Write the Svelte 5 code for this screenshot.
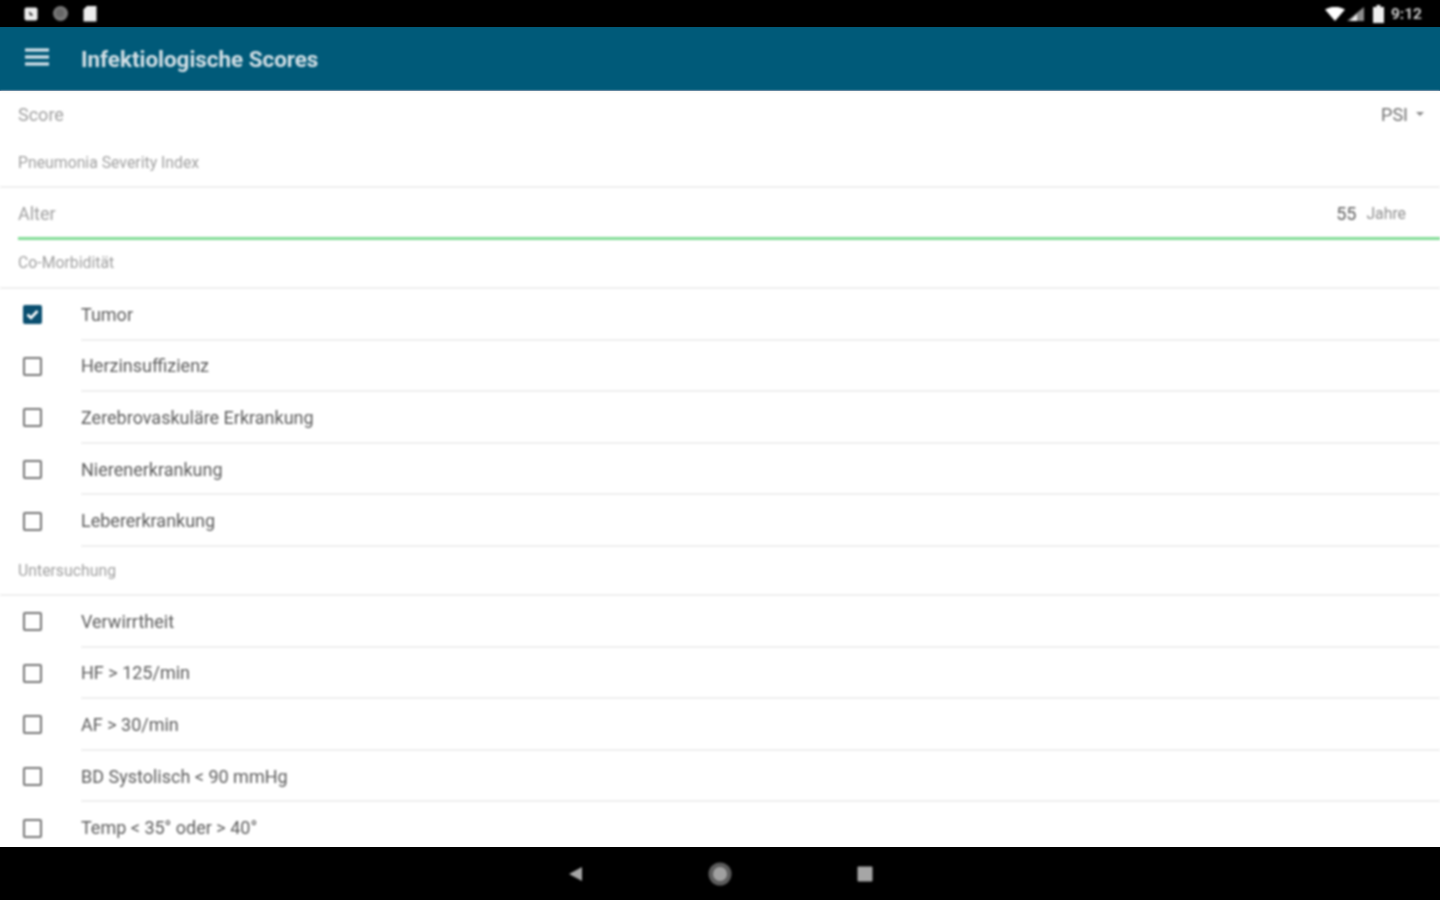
<script>
    const comorbid = [
        { label: 'Tumor', checked: true },
        { label: 'Herzinsuffizienz' },
        { label: 'Zerebrovaskuläre Erkrankung' },
        { label: 'Nierenerkrankung' },
        { label: 'Lebererkrankung' }
    ];
    const exam = [
        { label: 'Verwirrtheit' },
        { label: 'HF > 125/min' },
        { label: 'AF > 30/min' },
        { label: 'BD Systolisch < 90 mmHg' },
        { label: 'Temp < 35° oder > 40°' }
    ];
</script>

{#snippet row(item)}
    <div class="row">
        <span class="check" class:checked={item.checked}>
            {#if item.checked}
                <svg viewBox="0 0 15 15" width="15" height="15">
                    <path d="M2.5 7.5l3.5 3.5 6.5-7" fill="none" stroke="#fff" stroke-width="2.6" />
                </svg>
            {/if}
        </span>
        <span class="row-label">{item.label}</span>
    </div>
{/snippet}

<div class="screen">
    <div class="status-bar">
        <div class="status-icons soft">
            <svg viewBox="0 0 14 14" width="14" height="14">
                <rect x="0.5" y="0.5" width="13" height="13" rx="2" fill="#eee" />
                <path d="M5 4l4 4-1 1-1-1-1 1z" fill="#222" />
            </svg>
            <svg viewBox="0 0 17 17" width="17" height="17">
                <circle cx="8.5" cy="8.5" r="7.5" fill="#777" />
                <circle cx="8" cy="8" r="4" fill="#666" />
            </svg>
            <svg viewBox="0 0 14 17" width="14" height="17">
                <path d="M4 1h9.500v15.500H0.500V4.500z" fill="#eee" />
            </svg>
        </div>
        <div class="status-right soft">
            <svg viewBox="0 0 20 14" width="20" height="14">
                <path d="M0 2.500Q10-3 20 2.500L10 14z" fill="#fff" />
            </svg>
            <svg viewBox="0 0 17 14" width="17" height="14">
                <path d="M17 0v14H0z" fill="#8c8c8c" />
                <path d="M10 7v7H3z" fill="#eee" />
            </svg>
            <svg class="battery" viewBox="0 0 11 18" width="11" height="18">
                <path d="M3.500 0h4v2H11v16H0V2h3.500z" fill="#eee" />
            </svg>
            <span class="clock">9:12</span>
        </div>
    </div>

    <header class="toolbar">
        <svg class="menu soft" viewBox="0 0 24 18" width="24" height="18">
            <path d="M0 2h24M0 9h24M0 16h24" stroke="#dfeaf0" stroke-width="3" />
        </svg>
        <h1 class="soft">Infektiologische Scores</h1>
    </header>

    <main class="content soft">
        <section class="score">
            <div class="score-top">
                <span class="muted">Score</span>
                <span class="select">PSI<i class="caret"></i></span>
            </div>
            <div class="score-name">Pneumonia Severity Index</div>
        </section>

        <section class="age">
            <span class="muted">Alter</span>
            <span class="age-value">55</span>
            <span class="age-unit">Jahre</span>
        </section>

        <div class="heading first">Co-Morbidität</div>
        {#each comorbid as item}
            {@render row(item)}
        {/each}

        <div class="heading">Untersuchung</div>
        {#each exam as item}
            {@render row(item)}
        {/each}
    </main>

    <nav class="nav-bar">
        <svg class="soft" viewBox="0 0 15 16" width="15" height="16">
            <path d="M14 1v14L1 8z" fill="#a6a6a6" />
        </svg>
        <svg class="soft" viewBox="0 0 24 24" width="24" height="24">
            <circle cx="12" cy="12" r="11.500" fill="#5c5c5c" />
            <circle cx="12" cy="12" r="7" fill="#a0a0a0" />
        </svg>
        <svg class="soft" viewBox="0 0 16 16" width="16" height="16">
            <rect x="0.500" y="0.500" width="15" height="15" rx="1" fill="#a6a6a6" />
        </svg>
    </nav>
</div>

<style>
    :global(body) {
        margin: 0;
        background: #fff;
    }

    .screen {
        width: 1440px;
        height: 900px;
        display: flex;
        flex-direction: column;
        overflow: hidden;
        font-family: Roboto, "Liberation Sans", sans-serif;
        color: #555;
    }

    /* the reference is an upscaled capture, so text and icons are slightly soft */
    .soft {
        filter: blur(0.8px);
    }

    .status-bar {
        height: 27px;
        flex: none;
        background: #000;
        display: flex;
        align-items: center;
        justify-content: space-between;
        padding: 0 18px 0 24px;
    }

    .status-icons {
        display: flex;
        align-items: center;
        gap: 14px;
    }

    .status-right {
        display: flex;
        align-items: center;
        gap: 2px;
    }

    .battery {
        margin-left: 7px;
    }

    .clock {
        margin-left: 5px;
        font-size: 15.5px;
        font-weight: 700;
        color: #c8c8c8;
    }

    .toolbar {
        height: 64px;
        flex: none;
        box-sizing: border-box;
        background: #005a79;
        border-bottom: 1px solid #2e5f85;
        display: flex;
        align-items: center;
        padding-left: 25px;
    }

    .menu {
        margin-top: -4px;
    }

    .toolbar h1 {
        margin: 1px 0 0 32px;
        font-size: 22.400px;
        font-weight: 700;
        color: #d3e0e6;
    }

    .content {
        flex: 1;
        min-height: 0;
        overflow: hidden;
        border-top: 1px solid #f6f4ee;
    }

    .muted {
        font-size: 18px;
        color: #a0a0a0;
    }

    .score {
        height: 96px;
        box-sizing: border-box;
        border-bottom: 2px solid #efefef;
        padding: 12px 16px 0 18px;
    }

    .score-top {
        display: flex;
        justify-content: space-between;
        align-items: center;
        height: 20px;
    }

    .select {
        font-size: 18px;
        color: #707070;
        display: flex;
        align-items: center;
    }

    .caret {
        margin-left: 8px;
        border: 4px solid transparent;
        border-top: 4px solid #888;
        border-bottom: 0;
    }

    .score-name {
        margin-top: 29px;
        font-size: 15.800px;
        color: #a0a0a0;
    }

    .age {
        height: 52px;
        margin-left: 18px;
        box-sizing: border-box;
        border-bottom: 3px solid #82dc96;
        display: flex;
        align-items: center;
        padding: 1px 34px 0 0;
    }

    .age-value {
        margin-left: auto;
        font-size: 18px;
        color: #606060;
    }

    .age-unit {
        margin-left: 10px;
        font-size: 15.800px;
        color: #909090;
    }

    .heading {
        height: 49px;
        box-sizing: border-box;
        border-bottom: 2px solid #efefef;
        padding: 14px 0 0 18px;
        font-size: 15.800px;
        color: #a0a0a0;
    }

    .heading.first {
        padding-top: 13px;
    }

    .row {
        height: 51.600px;
        display: flex;
        align-items: center;
    }

    .check {
        flex: none;
        width: 15px;
        height: 15px;
        margin: 0 39px 0 23px;
        border: 2px solid #757575;
        border-radius: 2px;
        display: flex;
        align-items: center;
        justify-content: center;
    }

    .check.checked {
        background: #0a4f70;
        border-color: #0a4f70;
    }

    .row-label {
        flex: 1;
        height: 100%;
        display: flex;
        align-items: center;
        box-sizing: border-box;
        padding-top: 1px;
        border-bottom: 2px solid #efefef;
        font-size: 18px;
        color: #5c5c5c;
    }

    .nav-bar {
        height: 53px;
        flex: none;
        background: #000;
        display: flex;
        align-items: center;
        justify-content: center;
        gap: 125px;
    }
</style>
